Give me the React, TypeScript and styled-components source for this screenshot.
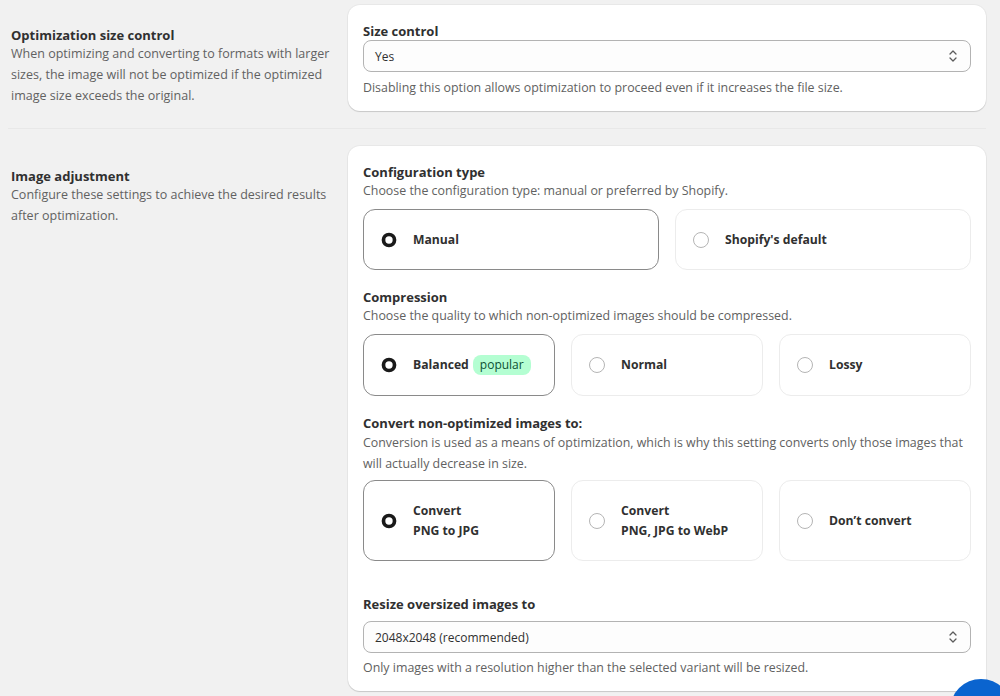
import React from "react";
import styled, { createGlobalStyle } from "styled-components";

/* Global ------------------------------------------------------------------- */
const GlobalStyle = createGlobalStyle`
  html, body {
    margin: 0;
    padding: 0;
    background: #f1f1f1;
    font-family: "Open Sans", "Noto Sans", sans-serif;
    color: #303030;
    -webkit-font-smoothing: antialiased;
  }
  * { box-sizing: border-box; }
`;

/* Layout ------------------------------------------------------------------- */
const Page = styled.div`
  padding: 5px 14px 0 11px;
  overflow: hidden;
  height: 696px;
`;

const Section = styled.section`
  display: grid;
  grid-template-columns: 321px 638px;
  column-gap: 16px;
  align-items: start;
`;

const Aside = styled.div`
  padding-top: 20px;
`;

const AsideTitle = styled.h2`
  margin: 0;
  font-size: 13px;
  font-weight: 700;
  line-height: 20px;
  color: #303030;
`;

const AsideText = styled.p`
  margin: -2px 0 0;
  font-size: 12.5px;
  line-height: 21px;
  color: #616161;
`;

const Divider = styled.hr`
  border: none;
  height: 1px;
  background: #e8e8e8;
  margin: 17px 0 17px -3px;
`;

const Card = styled.div`
  background: #fff;
  border-radius: 12px;
  padding: 16px 15px 13px;
  box-shadow: 0 1px 1px rgba(0, 0, 0, 0.14), 0 0 0 1px rgba(0, 0, 0, 0.035);
`;

const Heading = styled.h3<{ $gap?: number }>`
  margin: ${(p) => p.$gap ?? 0}px 0 0;
  font-size: 13px;
  font-weight: 700;
  line-height: 20px;
  color: #303030;
`;

const Help = styled.p<{ $lh?: number; $top?: number }>`
  margin: ${(p) => p.$top ?? -1}px 0 0;
  font-size: 12.4px;
  line-height: ${(p) => p.$lh ?? 20}px;
  color: #616161;
`;

/* Select ------------------------------------------------------------------- */
const SelectBox = styled.div<{ $top: number }>`
  display: flex;
  align-items: center;
  justify-content: space-between;
  height: 32px;
  margin: ${(p) => p.$top}px 0 7px;
  padding: 0 12px 0 11px;
  border: 1px solid #b3b3b3;
  border-radius: 8px;
  background: #fdfdfd;
  font-size: 12px;
  color: #303030;
`;

function Chevrons() {
  return (
    <svg width="10" height="14" viewBox="0 0 10 14" fill="none">
      <path d="M2 5 L5 2 L8 5" stroke="#5c5c5c" strokeWidth="1.3" strokeLinecap="round" strokeLinejoin="round" />
      <path d="M2 9 L5 12 L8 9" stroke="#5c5c5c" strokeWidth="1.3" strokeLinecap="round" strokeLinejoin="round" />
    </svg>
  );
}

function Select({ value, top = -1 }: { value: string; top?: number }) {
  return (
    <SelectBox $top={top}>
      <span>{value}</span>
      <Chevrons />
    </SelectBox>
  );
}

/* Option cards ------------------------------------------------------------- */
const OptionGrid = styled.div<{ $cols: number; $gap?: number }>`
  display: grid;
  grid-template-columns: repeat(${(p) => p.$cols}, 1fr);
  gap: 16px;
  margin-top: ${(p) => p.$gap ?? 8}px;
`;

const OptionCard = styled.div<{ $selected: boolean; $height: number }>`
  display: flex;
  align-items: center;
  gap: 16px;
  height: ${(p) => p.$height}px;
  padding: 0 17px;
  border-radius: 12px;
  border: 1px solid ${(p) => (p.$selected ? "#8a8a8a" : "#ececec")};
  background: #fff;
`;

const Radio = styled.span<{ $checked: boolean }>`
  flex: none;
  width: 16px;
  height: 16px;
  border-radius: 50%;
  border: ${(p) => (p.$checked ? "4.5px solid #1a1a1a" : "1px solid #b5b5b5")};
  ${(p) => (p.$checked ? "transform: scale(0.92);" : "")}
`;

const OptionLabel = styled.span`
  display: flex;
  align-items: center;
  gap: 4px;
  font-size: 12.2px;
  font-weight: 700;
  line-height: 20px;
  color: #303030;
`;

const Badge = styled.span`
  display: inline-block;
  padding: 0 7px;
  border-radius: 8px;
  background: #b4fed2;
  color: #0c5132;
  font-size: 12px;
  font-weight: 400;
  line-height: 20px;
`;

interface Option {
  label: React.ReactNode;
  selected?: boolean;
}

function OptionRow({ options, height, gap }: { options: Option[]; height: number; gap?: number }) {
  return (
    <OptionGrid $cols={options.length} $gap={gap}>
      {options.map((o, i) => (
        <OptionCard key={i} $selected={!!o.selected} $height={height}>
          <Radio $checked={!!o.selected} />
          <OptionLabel>{o.label}</OptionLabel>
        </OptionCard>
      ))}
    </OptionGrid>
  );
}

/* Floating button ---------------------------------------------------------- */
const Fab = styled.div`
  position: fixed;
  right: -12px;
  bottom: -45px;
  width: 62px;
  height: 62px;
  border-radius: 50%;
  background: #0a64cf;
`;

/* App ---------------------------------------------------------------------- */
export default function App() {
  return (
    <>
      <GlobalStyle />
      <Page>
        <Section>
          <Aside>
            <AsideTitle>Optimization size control</AsideTitle>
            <AsideText>
              When optimizing and converting to formats with larger sizes, the image will not be
              optimized if the optimized image size exceeds the original.
            </AsideText>
          </Aside>
          <Card>
            <Heading>Size control</Heading>
            <Select value="Yes" />
            <Help>Disabling this option allows optimization to proceed even if it increases the file size.</Help>
          </Card>
        </Section>

        <Divider />

        <Section>
          <Aside>
            <AsideTitle>Image adjustment</AsideTitle>
            <AsideText>Configure these settings to achieve the desired results after optimization.</AsideText>
          </Aside>
          <Card>
            <Heading>Configuration type</Heading>
            <Help>Choose the configuration type: manual or preferred by Shopify.</Help>
            <OptionRow
              height={61}
              options={[{ label: "Manual", selected: true }, { label: "Shopify's default" }]}
            />

            <Heading $gap={17}>Compression</Heading>
            <Help>Choose the quality to which non-optimized images should be compressed.</Help>
            <OptionRow
              height={62}
              options={[
                {
                  label: (
                    <>
                      Balanced <Badge>popular</Badge>
                    </>
                  ),
                  selected: true,
                },
                { label: "Normal" },
                { label: "Lossy" },
              ]}
            />

            <Heading $gap={17}>Convert non-optimized images to:</Heading>
            <Help $lh={21}>
              Conversion is used as a means of optimization, which is why this setting converts only
              those images that will actually decrease in size.
            </Help>
            <OptionRow
              height={81}
              gap={6}
              options={[
                {
                  label: (
                    <span>
                      Convert
                      <br />
                      PNG to JPG
                    </span>
                  ),
                  selected: true,
                },
                {
                  label: (
                    <span>
                      Convert
                      <br />
                      PNG, JPG to WebP
                    </span>
                  ),
                },
                { label: "Don’t convert" },
              ]}
            />

            <Heading $gap={33}>Resize oversized images to</Heading>
            <Select value="2048x2048 (recommended)" top={7} />
            <Help $top={-2}>Only images with a resolution higher than the selected variant will be resized.</Help>
          </Card>
        </Section>
      </Page>
      <Fab />
    </>
  );
}
